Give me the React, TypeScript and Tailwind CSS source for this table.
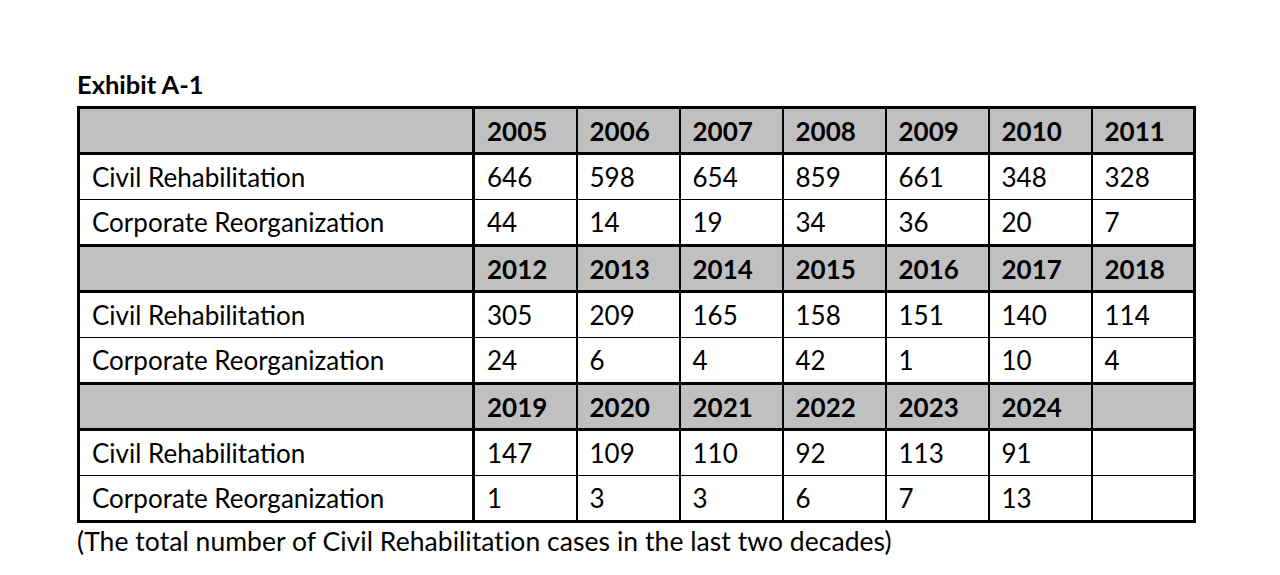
const years = [
  {
    years: ['2005', '2006', '2007', '2008', '2009', '2010', '2011'],
    civil: ['646', '598', '654', '859', '661', '348', '328'],
    corp: ['44', '14', '19', '34', '36', '20', '7'],
  },
  {
    years: ['2012', '2013', '2014', '2015', '2016', '2017', '2018'],
    civil: ['305', '209', '165', '158', '151', '140', '114'],
    corp: ['24', '6', '4', '42', '1', '10', '4'],
  },
  {
    years: ['2019', '2020', '2021', '2022', '2023', '2024', ''],
    civil: ['147', '109', '110', '92', '113', '91', ''],
    corp: ['1', '3', '3', '6', '7', '13', ''],
  },
];

export default function App() {
  return (
    <div
      className="w-[1280px] h-[575px] bg-white text-black pt-[68px] pl-[77px]"
      style={{ fontFamily: 'Lato, "Noto Sans", sans-serif' }}
    >
      <h1 className="text-[25.5px] font-bold leading-[32px] h-[38px]">Exhibit A-1</h1>
      <table className="border-collapse border-[3px] border-black text-[26px] leading-none">
        <colgroup>
          <col className="w-[395px]" />
          {years[0].years.map((_, i) => (
            <col key={i} className="w-[103px]" />
          ))}
        </colgroup>
        <tbody>
          {years.map((block, b) => (
            <>
              <tr key={`h${b}`} className="h-[46px] bg-[#c0c0c0] font-bold border-y-[3px] border-black">
                <td className="border-r-[3px] border-black"></td>
                {block.years.map((y, i) => (
                  <td key={i} className="border-l-2 border-black px-[12px] text-left">{y}</td>
                ))}
              </tr>
              <tr key={`c${b}`} className="h-[46px] border-b border-black">
                <td className="border-r-[3px] border-black px-[12px]">Civil Rehabilitation</td>
                {block.civil.map((v, i) => (
                  <td key={i} className="border-l-2 border-black px-[12px]">{v}</td>
                ))}
              </tr>
              <tr key={`r${b}`} className="h-[46px]">
                <td className="border-r-[3px] border-black px-[12px]">Corporate Reorganization</td>
                {block.corp.map((v, i) => (
                  <td key={i} className="border-l-2 border-black px-[12px]">{v}</td>
                ))}
              </tr>
            </>
          ))}
        </tbody>
      </table>
      <p className="text-[26.5px] leading-[32px] mt-[2px] tracking-[0.05px]">
        (The total number of Civil Rehabilitation cases in the last two decades)
      </p>
    </div>
  );
}
